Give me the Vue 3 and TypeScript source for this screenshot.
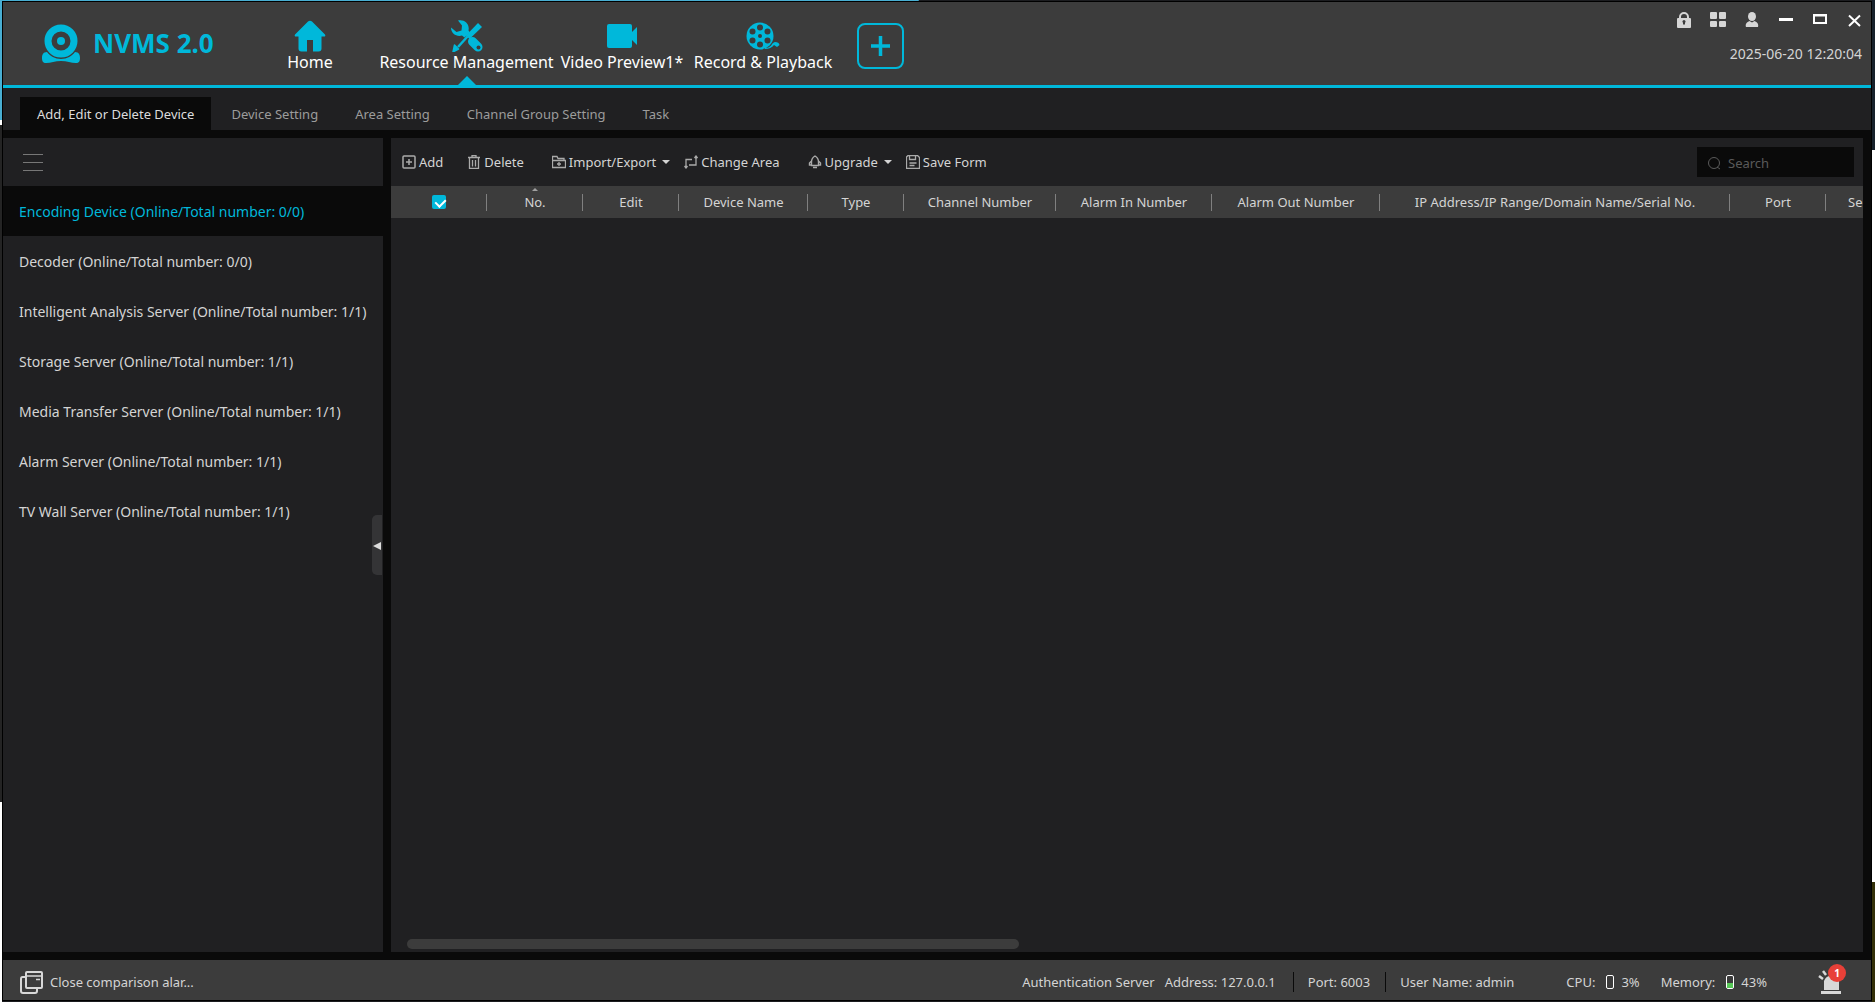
<script setup lang="ts">
import { ref } from 'vue'

interface Column {
  label: string
  width: number
  sorted?: boolean
}

interface Server {
  name: string
  online: number
  total: number
}

const search = ref('')
const allSelected = ref(true)
const activeTab = ref(0)
const activeServer = ref(0)

const tabs: string[] = [
  'Add, Edit or Delete Device',
  'Device Setting',
  'Area Setting',
  'Channel Group Setting',
  'Task',
]

const servers: Server[] = [
  { name: 'Encoding Device', online: 0, total: 0 },
  { name: 'Decoder', online: 0, total: 0 },
  { name: 'Intelligent Analysis Server', online: 1, total: 1 },
  { name: 'Storage Server', online: 1, total: 1 },
  { name: 'Media Transfer Server', online: 1, total: 1 },
  { name: 'Alarm Server', online: 1, total: 1 },
  { name: 'TV Wall Server', online: 1, total: 1 },
]

const columns: Column[] = [
  { label: 'No.', width: 96, sorted: true },
  { label: 'Edit', width: 96 },
  { label: 'Device Name', width: 129 },
  { label: 'Type', width: 96 },
  { label: 'Channel Number', width: 152 },
  { label: 'Alarm In Number', width: 156 },
  { label: 'Alarm Out Number', width: 168 },
  { label: 'IP Address/IP Range/Domain Name/Serial No.', width: 350 },
  { label: 'Port', width: 96 },
]
</script>

<template>
  <div class="desktop">
    <div class="window">
      <header class="header">
        <div class="brand">
          <svg class="brand-logo" width="40" height="40" viewBox="0 0 40 40">
            <circle cx="20" cy="17" r="13" fill="none" stroke="#00b8da" stroke-width="7" />
            <circle cx="20" cy="17" r="4" fill="#00b8da" />
            <path d="M6 28c-4 0-5 3-5 6s1 5 4 5c5 0 9-2 15-2s10 2 15 2c3 0 4-2 4-5s-1-6-5-6c-3 4-8 7-14 7S9 32 6 28z" fill="#00b8da" />
          </svg>
          <span class="brand-name">NVMS 2.0</span>
        </div>

        <nav class="nav">
          <button type="button" class="nav-item home">
            <svg width="32" height="32" viewBox="0 0 32 32" fill="#00b8da">
              <path d="M14 1.500q2-1.500 4 0l13 13q1 2-1 2h-2.500v12q0 3-3 3H19V20h-6v11.500H7.500q-3 0-3-3v-12H2q-2 0-1-2z" />
            </svg>
            <span>Home</span>
          </button>
          <button type="button" class="nav-item resource current">
            <svg width="32" height="32" viewBox="0 0 32 32">
              <path d="M7 .5c6-1.500 12 3 10.500 10L19 12.500l-5.500 5-2.500-2C6 17 0 14 0 7.500L5.500 12l5-1.500.5-5z" fill="#00b8da" />
              <path d="M27 3l4 4-12.500 12-3.500-3.500z" fill="#00b8da" />
              <path d="M16.500 16.500L7 27" stroke="#00b8da" stroke-width="2.500" />
              <path d="M3.500 25l4 4-5.500 3z" fill="#00b8da" stroke="#00b8da" stroke-width="1.500" stroke-linejoin="round" />
              <path d="M21.500 21.500l5.500 5.500" stroke="#00b8da" stroke-width="9" stroke-linecap="round" />
              <circle cx="27.500" cy="27.500" r="2" fill="#3c3c3c" />
            </svg>
            <span>Resource Management</span>
          </button>
          <button type="button" class="nav-item video">
            <svg width="32" height="32" viewBox="0 0 32 32" fill="#00b8da">
              <rect x="1" y="4" width="25" height="24" rx="2" />
              <path d="M25 13l6-6v18l-6-6z" />
            </svg>
            <span>Video Preview1*</span>
          </button>
          <button type="button" class="nav-item record">
            <svg width="34" height="32" viewBox="0 0 34 32">
              <circle cx="14" cy="16" r="13.500" fill="#00b8da" />
              <g fill="#3c3c3c">
                <circle cx="14" cy="7.500" r="3" />
                <circle cx="14" cy="24.500" r="3" />
                <circle cx="6.500" cy="11.500" r="3" />
                <circle cx="21.500" cy="11.500" r="3" />
                <circle cx="6.500" cy="20.500" r="3" />
                <circle cx="21.500" cy="20.500" r="3" />
                <circle cx="14" cy="16" r="2" />
              </g>
              <path d="M19 28c7 0 6-5 10-6q4 0 4.500 3l-2.500 2-3-2q-3 4-9 4z" fill="#00b8da" />
            </svg>
            <span>Record &amp; Playback</span>
          </button>
        </nav>

        <button type="button" class="new-view" aria-label="New view">
          <svg width="19" height="20" viewBox="0 0 19 20">
            <path d="M8 0h3v8.500h8v3h-8V20H8v-8.500H0v-3h8z" fill="#00b8da" stroke="#00b8da" stroke-width=".5" />
          </svg>
        </button>

        <div class="header-end">
          <div class="controls">
            <button type="button" aria-label="Lock">
              <svg width="16" height="18" viewBox="0 0 16 18">
                <path d="M4 9V6a4 4 0 0 1 8 0v3" fill="none" stroke="#d6d6d6" stroke-width="2" />
                <rect x="1" y="7" width="14" height="10" rx="1" fill="#d6d6d6" />
                <path d="M8 13.500v-3" stroke="#3c3c3c" stroke-width="2" />
                <circle cx="8" cy="10.500" r="1.500" fill="#3c3c3c" />
              </svg>
            </button>
            <button type="button" aria-label="Panels">
              <svg width="16" height="18" viewBox="0 0 16 18" fill="#d6d6d6">
                <rect x="0" y="1" width="7" height="7" rx="1" />
                <rect x="9" y="1" width="7" height="7" rx="1" />
                <rect x="0" y="10" width="7" height="6" rx="1" />
                <rect x="9" y="10" width="7" height="6" rx="1" />
              </svg>
            </button>
            <button type="button" aria-label="User">
              <svg width="16" height="18" viewBox="0 0 16 18" fill="#d6d6d6">
                <ellipse cx="8" cy="5.500" rx="4" ry="4.500" />
                <path d="M2 16c-1-3 1-5 3.500-6L8 11.500l2.500-1.500c2.500 1 4.500 3 3.500 6z" />
              </svg>
            </button>
            <button type="button" aria-label="Minimize">
              <svg width="16" height="18" viewBox="0 0 16 18">
                <rect x="1" y="7" width="14" height="3" fill="#fff" />
              </svg>
            </button>
            <button type="button" aria-label="Maximize">
              <svg width="16" height="18" viewBox="0 0 16 18">
                <path d="M1 3h14v10H1zM3 5.500v5.500h10V5.500z" fill="#fff" fill-rule="evenodd" />
              </svg>
            </button>
            <button type="button" aria-label="Close">
              <svg width="16" height="18" viewBox="0 0 16 18">
                <path d="M3 4.500l11 10.500M14 4.500L3 15" stroke="#fff" stroke-width="2" />
              </svg>
            </button>
          </div>
          <time class="clock">2025-06-20 12:20:04</time>
        </div>
      </header>

      <nav class="tabs">
        <button
          v-for="(tab, i) in tabs"
          :key="tab"
          type="button"
          class="tab"
          :class="{ active: i === activeTab }"
          @click="activeTab = i"
        >
          {{ tab }}
        </button>
      </nav>

      <div class="workspace">
        <aside class="sidebar">
          <div class="sidebar-head">
            <button type="button" aria-label="Menu">
              <svg width="20" height="18" viewBox="0 0 20 18">
                <path d="M0 1.500h20M0 9.500h20M0 17.500h20" stroke="#777" />
              </svg>
            </button>
          </div>
          <ul class="servers">
            <li v-for="(s, i) in servers" :key="s.name">
              <button type="button" :class="{ active: i === activeServer }" @click="activeServer = i">
                {{ s.name }} (Online/Total number: {{ s.online }}/{{ s.total }})
              </button>
            </li>
          </ul>
          <button type="button" class="collapse" aria-label="Collapse">
            <svg width="8" height="8" viewBox="0 0 8 8"><path d="M0 4l8-4v8z" fill="#dcdcdc" /></svg>
          </button>
        </aside>

        <main class="panel">
          <div class="toolbar">
            <button type="button">
              <svg width="14" height="14" viewBox="0 0 14 14" fill="none" stroke="#aaa">
                <rect x="1" y="1" width="12" height="12" rx="1" stroke-width="1.500" />
                <path d="M7 4v6M4 7h6" stroke-width="1.500" />
              </svg>
              Add
            </button>
            <button type="button" class="spaced">
              <svg width="14" height="14" viewBox="0 0 14 14" fill="none" stroke="#aaa">
                <path d="M1 2.500h12M5 2V.5h4V2M2.500 3v10.500h9V3M5.500 5v6.500M8.500 5v6.500" stroke-width="1.300" />
              </svg>
              Delete
            </button>
            <button type="button" class="menu">
              <svg width="14" height="14" viewBox="0 0 14 14" fill="none" stroke="#aaa">
                <path d="M.5 12.500v-11h4.500l1 2h6v2M.5 5.500h13v7H.5zM7 7v4M5 9h4" stroke-width="1.300" />
              </svg>
              Import/Export
              <span class="caret"></span>
            </button>
            <button type="button">
              <svg width="14" height="14" viewBox="0 0 14 14" fill="none" stroke="#aaa">
                <path d="M2 12V4.500h6M12 2v8H5M.5 11L2 13l1.500-2M10.500 3L12 1l1.500 2" stroke-width="1.300" />
              </svg>
              Change Area
            </button>
            <button type="button" class="menu">
              <svg width="14" height="14" viewBox="0 0 14 14" fill="none" stroke="#aaa">
                <path d="M7 1C4.500 2.500 3.500 4.500 3.500 7v3.500h7V7C10.500 4.500 9.500 2.500 7 1zM3.500 6L1.500 8v2h2M10.500 6l2 2v2h-2M5 12.500h4" stroke-width="1.400" />
              </svg>
              Upgrade
              <span class="caret"></span>
            </button>
            <button type="button">
              <svg width="14" height="14" viewBox="0 0 14 14" fill="none" stroke="#aaa">
                <path d="M2 .5h9.500l2 2v11H.5V2zM3.500 1v3.500h6V1M3.500 8h7M3.500 10.500h5" stroke-width="1.300" />
              </svg>
              Save Form
            </button>
            <label class="search">
              <svg width="14" height="14" viewBox="0 0 14 14" fill="none" stroke="#5a5a5a">
                <circle cx="7" cy="7" r="5.500" />
                <path d="M10 11l3 2" />
              </svg>
              <input v-model="search" type="text" placeholder="Search" aria-label="Search" />
            </label>
          </div>

          <div class="grid">
            <table class="devices">
              <thead>
                <tr>
                  <th class="check-col">
                    <input v-model="allSelected" type="checkbox" aria-label="Select all" />
                  </th>
                  <th v-for="c in columns" :key="c.label" :style="{ width: c.width + 'px' }">
                    <span v-if="c.sorted" class="sort"></span>{{ c.label }}
                  </th>
                  <th class="rest">Se</th>
                </tr>
              </thead>
            </table>
          </div>

          <div class="scroll-track"><div class="scroll-thumb"></div></div>
        </main>
      </div>

      <footer class="footer">
        <button type="button" class="alarm-toggle">
          <svg width="24" height="24" viewBox="0 0 24 24" fill="none" stroke="#d8d8d8" stroke-width="2">
            <rect x="6" y="2" width="16" height="16" rx="1" />
            <path d="M6 6h16M16 9.500h4" stroke-width="1.500" />
            <path d="M6 7H2.500Q1 7 1 9v12q0 2 2 2h12q2 0 2-2v-3" />
          </svg>
          Close comparison alar...
        </button>
        <div class="status">
          <span class="server-name">Authentication Server</span>
          <span class="server-address">Address: 127.0.0.1</span>
          <span class="port">Port: 6003</span>
          <span class="user">User Name: admin</span>
          <span class="meter cpu">CPU: <i class="gauge"></i> 3%</span>
          <span class="meter memory">Memory: <i class="gauge"><b></b></i> 43%</span>
          <button type="button" class="alarms" aria-label="Alarms">
            <svg width="26" height="28" viewBox="0 0 26 28">
              <path d="M7 22v-9a8 8 0 0 1 15 0v9z" fill="#d8d8d8" />
              <rect x="4" y="23" width="20" height="3" fill="#d8d8d8" />
              <path d="M2 8l4 3M6 3l3 4" stroke="#d8d8d8" stroke-width="2.500" />
            </svg>
            <span class="badge">1</span>
          </button>
        </div>
      </footer>
    </div>
  </div>
</template>

<style>
body {
  margin: 0;
  background: #1c1d20;
}
</style>

<style scoped>
* {
  box-sizing: border-box;
}

button {
  margin: 0;
  padding: 0;
  border: 0;
  background: none;
  color: inherit;
  font: inherit;
  white-space: nowrap;
}

svg {
  display: block;
  flex: none;
}

/* Slivers of the desktop that show around the window frame */
.desktop {
  display: flex;
  min-height: 100vh;
  padding: 1px 3px 1px 2px;
  background:
    linear-gradient(#48aed2 0 0) 0 0 / 49% 1px no-repeat,
    linear-gradient(#48aed2 0 12%, #fff 12% 12.5%, #242424 12.5% 80%, #fff 80%) 0 0 / 2px 100% no-repeat,
    linear-gradient(#17212b 0 15%, #fff 15% 88%, #333008 88%) 100% 0 / 3px 100% no-repeat,
    #1c1d20;
  font-family: "Noto Sans", "Open Sans", sans-serif;
  font-size: 13px;
  line-height: 20px;
  color: #d4d4d4;
}

.window {
  display: flex;
  flex: 1;
  flex-direction: column;
  min-width: 0;
  border: 1px solid #000;
  background: #0a0a0a;
}

.header {
  display: flex;
  height: 86px;
  border-bottom: 3px solid #00b8da;
  background: #3c3c3c;
}

.brand {
  display: flex;
  align-items: center;
  gap: 12px;
  width: 235px;
  padding-left: 38px;
}

.brand-name {
  padding-bottom: 2px;
  color: #00b8da;
  font-size: 26px;
  font-weight: 700;
  line-height: 32px;
}

.nav {
  display: flex;
}

.nav-item {
  position: relative;
  display: flex;
  flex-direction: column;
  align-items: center;
  padding-top: 18px;
  color: #fff;
  font-size: 16px;
}

.nav-item svg {
  margin-bottom: -2px;
}

.nav-item span {
  line-height: 24px;
}

.home {
  width: 144px;
}

.resource {
  width: 169px;
}

.video {
  width: 142px;
}

.record {
  width: 140px;
}

.current::after {
  position: absolute;
  bottom: 0;
  left: 50%;
  margin-left: -9px;
  border: 9px solid transparent;
  border-top-width: 0;
  border-bottom-color: #00b8da;
  content: "";
}

.new-view {
  display: flex;
  align-items: center;
  justify-content: center;
  align-self: flex-start;
  width: 47px;
  height: 46px;
  margin: 21px 0 0 24px;
  border: 2px solid #00b8da;
  border-radius: 8px;
}

.header-end {
  display: flex;
  flex-direction: column;
  align-items: flex-end;
  gap: 15px;
  margin-left: auto;
  padding: 9px 9px 0 0;
}

.controls {
  display: flex;
  gap: 18px;
}

.clock {
  font-size: 14px;
}

.tabs {
  display: flex;
  gap: 3px;
  height: 42px;
  padding: 9px 17px 0;
  background: #202022;
}

.tab {
  padding: 0 17px;
  color: #9c9c9c;
}

.tab.active {
  background: #0a0a0a;
  color: #dcdcdc;
}

.workspace {
  display: flex;
  flex: 1;
  gap: 8px;
  padding: 8px 8px 8px 0;
}

.sidebar {
  position: relative;
  flex: none;
  width: 380px;
  background: #202022;
}

.sidebar-head {
  display: flex;
  align-items: center;
  height: 48px;
  padding: 0 20px;
}

.servers {
  margin: 0;
  padding: 0;
  list-style: none;
}

.servers button {
  width: 100%;
  height: 50px;
  padding: 2px 16px 0;
  font-size: 14px;
  text-align: left;
}

.servers .active {
  background: #0a0a0a;
  color: #00b8da;
}

.collapse {
  position: absolute;
  top: 377px;
  right: 1px;
  width: 10px;
  height: 60px;
  padding: 2px 1px 0;
  border-radius: 5px 0 0 5px;
  background: #343436;
}

.panel {
  display: flex;
  flex: 1;
  flex-direction: column;
  min-width: 0;
  background: #202022;
}

.toolbar {
  display: flex;
  align-items: center;
  gap: 14px;
  height: 48px;
  padding: 0 9px 0 11px;
}

.toolbar button {
  display: flex;
  align-items: center;
  gap: 3px;
}

.toolbar .spaced {
  margin-left: 10px;
}

.toolbar .menu {
  margin-left: 14px;
}

.caret {
  margin-left: 3px;
  border: 4px solid transparent;
  border-top-color: #d4d4d4;
  border-bottom-width: 0;
}

.search {
  display: flex;
  align-items: center;
  gap: 7px;
  width: 157px;
  height: 30px;
  margin-left: auto;
  padding: 2px 10px 0;
  background: #0a0a0a;
}

.search input {
  flex: 1;
  min-width: 0;
  padding: 0;
  border: 0;
  outline: 0;
  background: none;
  color: #d4d4d4;
  font: inherit;
}

.search input::placeholder {
  color: #5a5a5a;
  opacity: 1;
}

.grid {
  flex: 1;
  overflow: hidden;
}

.devices {
  width: 100%;
  border-collapse: collapse;
  table-layout: fixed;
  background: #3c3c3c;
}

.devices th {
  position: relative;
  height: 32px;
  padding: 0;
  font-weight: 400;
  white-space: nowrap;
}

.devices th::after {
  position: absolute;
  top: 8px;
  right: 0;
  width: 1px;
  height: 17px;
  background: #808080;
  content: "";
}

.devices .rest {
  padding-left: 22px;
  text-align: left;
}

.devices .rest::after {
  display: none;
}

.check-col {
  width: 96px;
}

.check-col input {
  position: relative;
  display: block;
  width: 14px;
  height: 14px;
  margin: 0 auto;
  border-radius: 2px;
  background: #00b8da;
  appearance: none;
}

.check-col input:checked::after {
  position: absolute;
  top: 2px;
  left: 5px;
  width: 5px;
  height: 8px;
  border: solid #fff;
  border-width: 0 2px 2px 0;
  transform: rotate(45deg);
  content: "";
}

.sort {
  position: absolute;
  top: 2px;
  left: 50%;
  margin-left: -3px;
  border: 3px solid transparent;
  border-top-width: 0;
  border-bottom-color: #a0a0a0;
}

.scroll-track {
  height: 10px;
  margin: 0 0 3px 16px;
}

.scroll-thumb {
  width: 42%;
  height: 10px;
  border-radius: 5px;
  background: #3c3c3c;
}

.footer {
  display: flex;
  align-items: center;
  justify-content: space-between;
  height: 40px;
  padding: 4px 28px 0 17px;
  background: #3c3c3c;
}

.alarm-toggle {
  display: flex;
  align-items: center;
  gap: 6px;
}

.status {
  display: flex;
  align-items: center;
}

.server-name {
  margin-right: 10px;
}

.server-address {
  padding-right: 17px;
  border-right: 1px solid #0a0a0a;
}

.port {
  margin-left: 14px;
  padding-right: 15px;
  border-right: 1px solid #0a0a0a;
}

.user {
  margin-left: 14px;
}

.meter {
  display: flex;
  align-items: center;
  gap: 7px;
}

.cpu {
  margin-left: 52px;
}

.memory {
  margin-left: 21px;
}

.gauge {
  display: flex;
  flex-direction: column;
  justify-content: flex-end;
  width: 8px;
  height: 14px;
  margin-left: 4px;
  border: 1px solid #fff;
  border-radius: 2px;
}

.gauge b {
  height: 43%;
  background: #58c858;
}

.alarms {
  position: relative;
  margin-left: 50px;
}

.badge {
  position: absolute;
  top: -4px;
  right: -3px;
  width: 18px;
  height: 18px;
  border-radius: 9px;
  background: #e84038;
  color: #fff;
  font-size: 10px;
  font-weight: 700;
  line-height: 18px;
  text-align: center;
}
</style>
